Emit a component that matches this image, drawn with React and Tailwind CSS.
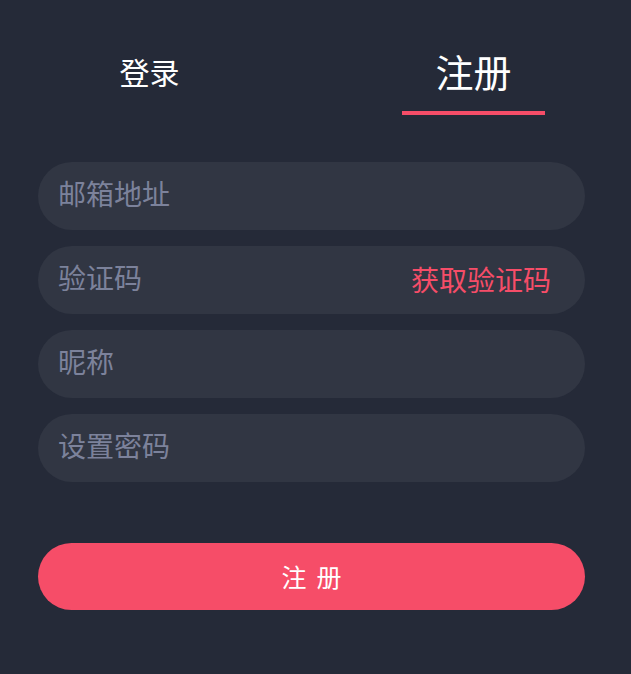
import React from "react";

const font = { fontFamily: '"Noto Sans CJK SC", "Noto Sans", sans-serif' };

function Field({ placeholder, action }) {
  return (
    <div className="flex h-[68px] w-full items-center rounded-full bg-[#313643] pl-[20px] pr-[34px]">
      <input
        className="mb-[7px] min-w-0 flex-1 bg-transparent text-[28px] leading-none text-white outline-none placeholder:text-[#7c829b]"
        style={font}
        placeholder={placeholder}
      />
      {action && (
        <span className="mb-[2px] text-[28px] leading-none text-[#f64d68]">{action}</span>
      )}
    </div>
  );
}

export default function App() {
  return (
    <div className="min-h-screen w-full bg-[#252a38]" style={font}>
      <div className="flex justify-between pl-[78px] pr-[86px] pt-[51px]">
        <div className="flex w-[143px] flex-col items-center">
          <div className="flex h-[40px] items-center text-[30px] leading-none text-white">登录</div>
          <div className="mt-[20px] h-[4px] w-[143px]" />
        </div>
        <div className="flex w-[143px] flex-col items-center">
          <div className="flex h-[40px] items-center text-[38px] leading-none text-white">注册</div>
          <div className="mt-[20px] h-[4px] w-[143px] bg-[#f64d68]" />
        </div>
      </div>
      <div className="mt-[47px] flex flex-col gap-[16px] pl-[38px] pr-[46px]">
        <Field placeholder="邮箱地址" />
        <Field placeholder="验证码" action="获取验证码" />
        <Field placeholder="昵称" />
        <Field placeholder="设置密码" />
      </div>
      <div className="mt-[61px] pl-[38px] pr-[46px]">
        <button
          className="flex h-[67px] w-full items-center justify-center rounded-full bg-[#f64d68] pl-[10px] text-[25px] leading-none tracking-[10px] text-white"
          style={font}
        >
          注册
        </button>
      </div>
    </div>
  );
}
